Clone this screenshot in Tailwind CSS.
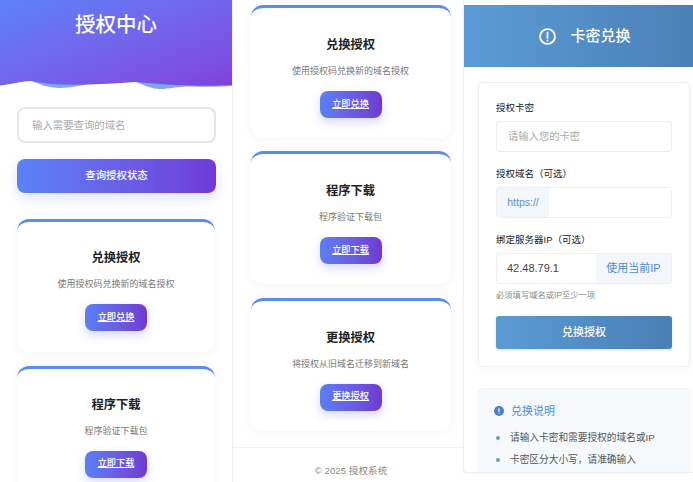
<!DOCTYPE html>
<html lang="zh-CN">
<head>
<meta charset="utf-8">
<script src="https://cdn.jsdelivr.net/npm/@tailwindcss/browser@4"></script>
</head>
<body class="m-0 overflow-hidden bg-white">
<div class="flex h-[482px] w-[693px] overflow-hidden bg-white text-[#222] font-['Liberation_Sans','Noto_Sans_CJK_SC',sans-serif]">

  <!-- Left -->
  <div class="h-full w-[233px] shrink-0 overflow-hidden border-r border-[#efeff3] bg-white">
    <div class="relative h-[90px] bg-gradient-to-br from-[#5b82f8] to-[#8040dc] text-center">
      <h1 class="pt-[10px] text-[20.5px] leading-[30px] font-medium text-white">授权中心</h1>
      <svg class="absolute top-[80px] left-0 h-[10px] w-[233px]" viewBox="0 0 233 10" preserveAspectRatio="none">
        <path d="M0 5.5 C12 4 24 1 31 1 C40 2 48 4 60 4.5 C85 5 115 4 136 2 C150 3 170 5 190 5.5 C205 6 220 6 233 5 V10 H0 Z" fill="#7fa6f2"/>
        <path d="M136 2 C146 6 152 9 160 9 C170 9 176 6.5 190 6.5 C205 7 220 7 233 6 V10 H0 V5.5 C12 4 24 1 31 1 C40 4 48 8 60 8 C72 8 80 5 90 4.5 C105 4 122 3 136 2 Z" fill="#fff"/>
      </svg>
    </div>
    <div class="px-[17px] pt-[17px]">
      <input class="block h-[36px] w-[199px] rounded-[8px] border-2 border-[#e6e6ea] bg-white px-[13px] text-[10.4px] outline-none placeholder:text-[#a8a8ae]" placeholder="输入需要查询的域名">
      <button class="mt-[16px] block h-[34px] w-[199px] rounded-[8px] bg-gradient-to-r from-[#5a82f8] to-[#6f3ad8] text-[10.4px] font-medium text-white shadow-[0_5px_12px_rgba(91,130,248,0.22)]">查询授权状态</button>
      <div class="mt-[26px] flex flex-col gap-[13.5px]">
        <div class="h-[133px] rounded-[12px] border-t-[3px] border-[#5b8cf0] bg-white px-2 pt-[26px] text-center shadow-[0_2px_12px_rgba(0,0,0,0.04)]">
          <h3 class="text-[12.3px] leading-[20px] font-semibold text-[#222]">兑换授权</h3>
          <p class="mt-[9px] text-[9px] leading-[14px] text-[#777]">使用授权码兑换新的域名授权</p>
          <a href="#" class="mx-auto mt-[13px] flex h-[27px] w-[62px] items-center justify-center rounded-[8px] bg-gradient-to-r from-[#5a7ff5] to-[#6f3ad0] text-[9.2px] font-medium text-white underline shadow-[0_4px_10px_rgba(91,100,248,0.25)]">立即兑换</a>
        </div>
        <div class="h-[133px] rounded-[12px] border-t-[3px] border-[#5b8cf0] bg-white px-2 pt-[26px] text-center shadow-[0_2px_12px_rgba(0,0,0,0.04)]">
          <h3 class="text-[12.3px] leading-[20px] font-semibold text-[#222]">程序下载</h3>
          <p class="mt-[9px] text-[9px] leading-[14px] text-[#777]">程序验证下载包</p>
          <a href="#" class="mx-auto mt-[13px] flex h-[27px] w-[62px] items-center justify-center rounded-[8px] bg-gradient-to-r from-[#5a7ff5] to-[#6f3ad0] text-[9.2px] font-medium text-white underline shadow-[0_4px_10px_rgba(91,100,248,0.25)]">立即下载</a>
        </div>
      </div>
    </div>
  </div>

  <!-- Middle -->
  <div class="h-full w-[230px] shrink-0 overflow-hidden bg-white">
    <div class="flex w-[200px] ml-[17.5px] flex-col gap-[13.2px] pt-[5.3px]">
      <div class="h-[133px] rounded-[12px] border-t-[3px] border-[#5b8cf0] bg-white px-2 pt-[27px] text-center shadow-[0_2px_12px_rgba(0,0,0,0.04)]">
        <h3 class="text-[12.3px] leading-[20px] font-semibold text-[#222]">兑换授权</h3>
        <p class="mt-[9px] text-[9px] leading-[14px] text-[#777]">使用授权码兑换新的域名授权</p>
        <a href="#" class="mx-auto mt-[13px] flex h-[27px] w-[62px] items-center justify-center rounded-[8px] bg-gradient-to-r from-[#5a7ff5] to-[#6f3ad0] text-[9.2px] font-medium text-white underline shadow-[0_4px_10px_rgba(91,100,248,0.25)]">立即兑换</a>
      </div>
      <div class="h-[133px] rounded-[12px] border-t-[3px] border-[#5b8cf0] bg-white px-2 pt-[27px] text-center shadow-[0_2px_12px_rgba(0,0,0,0.04)]">
        <h3 class="text-[12.3px] leading-[20px] font-semibold text-[#222]">程序下载</h3>
        <p class="mt-[9px] text-[9px] leading-[14px] text-[#777]">程序验证下载包</p>
        <a href="#" class="mx-auto mt-[13px] flex h-[27px] w-[62px] items-center justify-center rounded-[8px] bg-gradient-to-r from-[#5a7ff5] to-[#6f3ad0] text-[9.2px] font-medium text-white underline shadow-[0_4px_10px_rgba(91,100,248,0.25)]">立即下载</a>
      </div>
      <div class="h-[133px] rounded-[12px] border-t-[3px] border-[#5b8cf0] bg-white px-2 pt-[27px] text-center shadow-[0_2px_12px_rgba(0,0,0,0.04)]">
        <h3 class="text-[12.3px] leading-[20px] font-semibold text-[#222]">更换授权</h3>
        <p class="mt-[9px] text-[9px] leading-[14px] text-[#777]">将授权从旧域名迁移到新域名</p>
        <a href="#" class="mx-auto mt-[13px] flex h-[27px] w-[62px] items-center justify-center rounded-[8px] bg-gradient-to-r from-[#5a7ff5] to-[#6f3ad0] text-[9.2px] font-medium text-white underline shadow-[0_4px_10px_rgba(91,100,248,0.25)]">更换授权</a>
      </div>
    </div>
    <div class="mt-[16px] border-t border-[#f3f3f6] pt-[16px] pl-[6px] text-center text-[9.5px] leading-[14px] tracking-[0.1px] text-[#888]">© 2025 授权系统</div>
  </div>

  <!-- Right -->
  <div class="h-[473px] w-[230px] shrink-0">
    <div class="h-full overflow-hidden rounded-bl-[4px] border-l border-b border-[#efeff3] bg-white pt-[5px] shadow-[0_1px_4px_rgba(0,0,0,0.04)]">
      <div class="flex h-[62px] w-[242px] items-center justify-center gap-[14px] bg-gradient-to-r from-[#5b9bd5] to-[#4a7fb5] text-white">
        <svg class="h-[17px] w-[17px]" viewBox="0 0 24 24" fill="none" stroke="currentColor" stroke-width="2.6" stroke-linecap="round"><circle cx="12" cy="12" r="10.5"/><path d="M12 6.5v7.5M12 17.6v.2"/></svg>
        <span class="text-[15px] font-medium">卡密兑换</span>
      </div>
      <div class="mt-[15px] ml-[14px] h-[285px] w-[212px] rounded-[5px] border border-[#f0f0f2] bg-white px-[17px] pt-[17px] shadow-[0_2px_8px_rgba(0,0,0,0.04)]">
        <label class="block text-[9.5px] leading-[16px] text-[#222]">授权卡密</label>
        <input class="mt-[5px] block h-[31px] w-full rounded-[3px] border border-[#eeeef0] px-[11px] text-[10.3px] outline-none placeholder:text-[#aaa]" placeholder="请输入您的卡密">
        <label class="mt-[14px] block text-[9.5px] leading-[16px] text-[#222]">授权域名（可选）</label>
        <div class="mt-[5px] flex h-[31px] overflow-hidden rounded-[3px] border border-[#eeeef0]">
          <span class="flex w-[52px] items-center justify-center bg-[#f3f6fb] text-[10.5px] text-[#5b8fd0]">https://</span>
          <input class="min-w-0 flex-1 outline-none">
        </div>
        <label class="mt-[14px] block text-[9.5px] leading-[16px] text-[#222]">绑定服务器IP（可选）</label>
        <div class="mt-[5px] flex h-[31px] overflow-hidden rounded-[3px] border border-[#eeeef0]">
          <input class="w-[99px] min-w-0 px-[10px] text-[11px] text-[#444] outline-none" value="42.48.79.1">
          <span class="flex flex-1 items-center justify-center bg-[#f3f6fb] text-[11px] text-[#4a8ad0]">使用当前IP</span>
        </div>
        <p class="mt-[5px] text-[8.3px] leading-[12px] text-[#888]">必须填写域名或IP至少一项</p>
        <button class="mt-[15px] block h-[33px] w-full rounded-[3px] bg-gradient-to-r from-[#5b9bd5] to-[#4a7fb5] text-[11px] font-medium text-white shadow-[0_1px_3px_rgba(0,0,0,0.15)]">兑换授权</button>
      </div>
      <div class="mt-[21px] ml-[14px] h-[200px] w-[212px] rounded-[5px] border border-[#f0f0f2] bg-[#f6f9fc] px-[15px] pt-[14px]">
        <div class="flex items-center gap-[7px] text-[#4a90d0]">
          <svg class="h-[10px] w-[10px]" viewBox="0 0 10 10"><circle cx="5" cy="5" r="5" fill="#4a7fc0"/><path d="M5 2.5v3M5 7v.3" stroke="#fff" stroke-width="1.1" stroke-linecap="round"/></svg>
          <span class="text-[11px] leading-[16px]">兑换说明</span>
        </div>
        <ul class="mt-[8px] text-[9.7px] text-[#555]">
          <li class="relative pl-[16px] leading-[22px] before:absolute before:left-[2px] before:top-[9px] before:size-[4px] before:rounded-full before:bg-[#5b9bd5]">请输入卡密和需要授权的域名或IP</li>
          <li class="relative pl-[16px] leading-[22px] before:absolute before:left-[2px] before:top-[9px] before:size-[4px] before:rounded-full before:bg-[#5b9bd5]">卡密区分大小写，请准确输入</li>
        </ul>
      </div>
    </div>
  </div>
</div>
</body>
</html>
